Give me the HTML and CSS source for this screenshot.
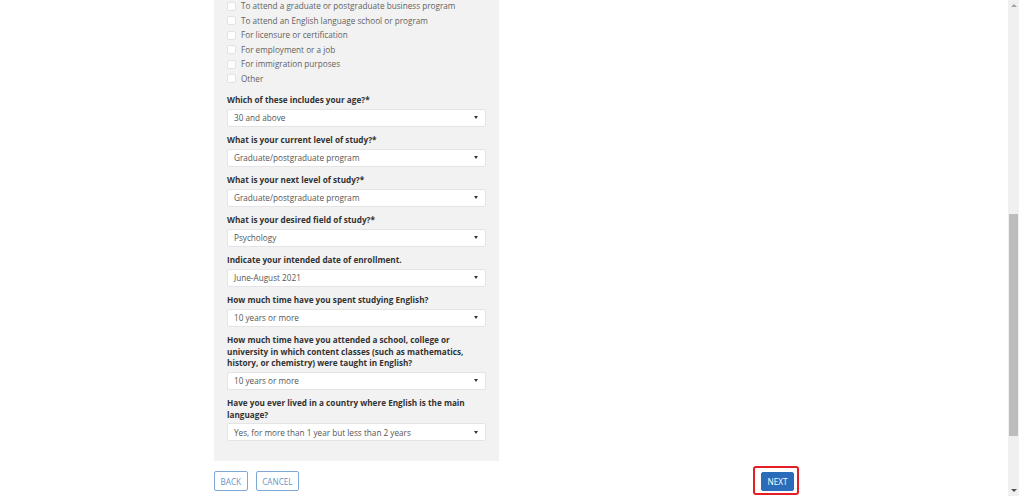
FILE: index.html
```html
<!DOCTYPE html>
<html lang="en">
<head>
<meta charset="utf-8">
<title>Survey</title>
<link rel="stylesheet" href="styles.css">
</head>
<body>
<div class="viewport">
  <main class="page">
    <div class="container">
      <section class="panel">
        <ul class="checks">
          <li><span class="box"></span>To attend a graduate or postgraduate business program</li>
          <li><span class="box"></span>To attend an English language school or program</li>
          <li><span class="box"></span>For licensure or certification</li>
          <li><span class="box"></span>For employment or a job</li>
          <li><span class="box"></span>For immigration purposes</li>
          <li><span class="box"></span>Other</li>
        </ul>
        <div class="field">
          <div class="label">Which of these includes your age?*</div>
          <div class="select"><span>30 and above</span><span class="caret"></span></div>
        </div>
        <div class="field">
          <div class="label">What is your current level of study?*</div>
          <div class="select"><span>Graduate/postgraduate program</span><span class="caret"></span></div>
        </div>
        <div class="field">
          <div class="label">What is your next level of study?*</div>
          <div class="select"><span>Graduate/postgraduate program</span><span class="caret"></span></div>
        </div>
        <div class="field">
          <div class="label">What is your desired field of study?*</div>
          <div class="select"><span>Psychology</span><span class="caret"></span></div>
        </div>
        <div class="field">
          <div class="label">Indicate your intended date of enrollment.</div>
          <div class="select"><span>June-August 2021</span><span class="caret"></span></div>
        </div>
        <div class="field">
          <div class="label">How much time have you spent studying English?</div>
          <div class="select"><span>10 years or more</span><span class="caret"></span></div>
        </div>
        <div class="field">
          <div class="label">How much time have you attended a school, college or university in which content classes (such as mathematics, history, or chemistry) were taught in English?</div>
          <div class="select"><span>10 years or more</span><span class="caret"></span></div>
        </div>
        <div class="field">
          <div class="label">Have you ever lived in a country where English is the main language?</div>
          <div class="select"><span>Yes, for more than 1 year but less than 2 years</span><span class="caret"></span></div>
        </div>
      </section>
      <div class="actions">
        <div class="left">
          <button class="btn outline">BACK</button>
          <button class="btn outline">CANCEL</button>
        </div>
        <div class="highlight">
          <button class="btn primary">NEXT</button>
        </div>
      </div>
    </div>
  </main>
  <div class="scrollbar">
    <span class="arrow up"></span>
    <div class="track"><div class="thumb"></div></div>
    <span class="arrow down"></span>
  </div>
</div>
</body>
</html>
```

FILE: styles.css
```css
* { box-sizing: border-box; }
html, body {
  margin: 0;
  padding: 0;
  height: 496px;
  overflow: hidden;
  background: #fff;
}
body {
  font-family: "Open Sans", "Liberation Sans", sans-serif;
  font-size: 8.2px;
  color: #333;
}
.viewport {
  display: flex;
  height: 496px;
}
.page {
  flex: 1;
  overflow: hidden;
}
.container {
  width: 580px;
  margin: -1px auto 0;
}
.panel {
  width: 285px;
  background: #f2f2f2;
  padding: 0 13px 20px;
}
.checks {
  list-style: none;
  margin: 0 0 8px;
  padding: 0;
}
.checks li {
  display: flex;
  align-items: center;
  height: 14.5px;
  line-height: 14.5px;
  color: #626262;
}
.box {
  width: 9px;
  height: 9px;
  background: #fff;
  border: 1px solid #e2e2e2;
  border-radius: 2px;
  margin-right: 5px;
  flex: none;
}
.field { margin-bottom: 7.5px; }
.field:last-child { margin-bottom: 0; }
.label {
  font-weight: 700;
  line-height: 11.5px;
  color: #333;
  margin-bottom: 3px;
}
.select {
  height: 18px;
  background: #fff;
  border: 1px solid #e4e4e4;
  border-radius: 2px;
  display: flex;
  align-items: center;
  justify-content: space-between;
  padding: 0 7px 0 6px;
  color: #555;
}
.caret {
  width: 0;
  height: 0;
  border-left: 2.5px solid transparent;
  border-right: 2.5px solid transparent;
  border-top: 3px solid #333;
}
.actions {
  display: flex;
  justify-content: space-between;
  align-items: center;
  margin-top: 10px;
}
.left { display: flex; gap: 8px; }
.btn {
  font-family: "Open Sans", "Liberation Sans", sans-serif;
  font-size: 8.2px;
  height: 20px;
  padding: 0 5.5px;
  border-radius: 2px;
  cursor: pointer;
}
.outline {
  background: #fff;
  border: 1px solid #7ea8d6;
  color: #6a95c6;
}
.primary {
  background: #2a6cba;
  border: 1px solid #2a6cba;
  color: #fff;
  height: 19px;
  padding: 0 5.5px;
}
.highlight {
  position: relative;
  display: flex;
}
.highlight::after {
  content: "";
  position: absolute;
  top: -6px;
  bottom: -4px;
  left: -8px;
  right: -5px;
  border: 2px solid #e31e24;
  border-radius: 3px;
  pointer-events: none;
}
.scrollbar {
  width: 11px;
  flex: none;
  background: #f0f0f0;
  display: flex;
  flex-direction: column;
  align-items: center;
}
.arrow {
  width: 0;
  height: 0;
  border-left: 3px solid transparent;
  border-right: 3px solid transparent;
  margin: 4px 0;
}
.arrow.up { border-bottom: 3px solid #a3a3a3; }
.arrow.down { border-top: 3px solid #505050; }
.track {
  flex: 1;
  width: 100%;
  padding: 203px 1px 49px;
}
.thumb {
  height: 100%;
  background: #bcbcbc;
}
```
